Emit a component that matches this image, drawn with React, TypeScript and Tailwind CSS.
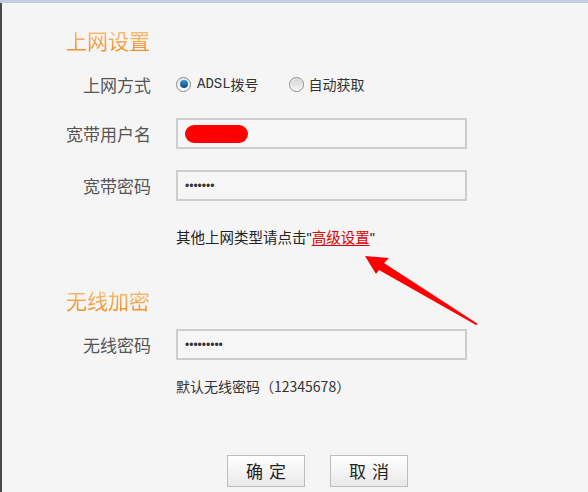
import React from "react";

const cjk = { fontFamily: '"Noto Sans CJK SC", "Liberation Sans", sans-serif' };

function Radio({ checked }: { checked: boolean }) {
  return (
    <span className="flex h-[15px] w-[15px] items-center justify-center rounded-full border border-[#8a8a8a] bg-gradient-to-b from-[#e8e8e8] to-[#ffffff]">
      {checked ? (
        <span className="h-[8px] w-[8px] rounded-full bg-gradient-to-b from-[#3a8fd0] to-[#0b4f8a]" />
      ) : (
        <span className="h-[11px] w-[11px] rounded-full bg-gradient-to-b from-[#d6d6d6] to-[#f4f4f4]" />
      )}
    </span>
  );
}

function Label({ children }: { children: React.ReactNode }) {
  return (
    <div className="w-[149px] shrink-0 text-right text-[17px] leading-none text-[#555555]" style={cjk}>
      {children}
    </div>
  );
}

function Input({ children }: { children?: React.ReactNode }) {
  return (
    <div className="ml-[25px] flex h-[31px] w-[291px] items-center border-2 border-[#cdcdcd] bg-[#f6f6f6] px-[7px]">
      {children}
    </div>
  );
}

function Dots({ n }: { n: number }) {
  return (
    <span
      className="text-[12px] leading-none tracking-[0px] text-[#333]"
      style={{ fontFamily: '"Liberation Sans", sans-serif' }}
    >
      {"•".repeat(n)}
    </span>
  );
}

function Title({ children }: { children: React.ReactNode }) {
  return (
    <div
      className="ml-[64px] h-[24px] w-fit bg-gradient-to-b from-[#fcc27a] to-[#f08c18] bg-clip-text text-[21px] leading-[24px] text-transparent"
      style={cjk}
    >
      {children}
    </div>
  );
}

function Button({ children }: { children: React.ReactNode }) {
  return (
    <div
      className="flex h-[32px] w-[78px] items-center justify-center gap-[6px] border border-[#bdbdbd] bg-gradient-to-b from-[#ffffff] to-[#e9e9e9] text-[17px] text-[#222]"
      style={cjk}
    >
      {children}
    </div>
  );
}

const q = { fontFamily: '"Liberation Sans", sans-serif' };

export default function App() {
  return (
    <div className="relative h-[492px] w-[588px] overflow-hidden border-t-[3px] border-[#c3cddd] bg-[#f5f5f5]">
      <div className="flex h-full flex-col border-l-2 border-[#4a4a4a]">
        <div className="mt-[25px]">
          <Title>上网设置</Title>
        </div>

        <div className="mt-[16px] flex h-[32px] items-center">
          <Label>上网方式</Label>
          <div className="ml-[25px] flex items-center text-[14px] text-[#333]" style={cjk}>
            <Radio checked />
            <span className="ml-[6px]" style={{ fontFamily: '"Liberation Mono", "Noto Sans CJK SC", monospace' }}>
              ADSL
            </span>
            <span>拨号</span>
            <span className="ml-[30px]">
              <Radio checked={false} />
            </span>
            <span className="ml-[5px]">自动获取</span>
          </div>
        </div>

        <div className="mt-[18px] flex items-center">
          <Label>宽带用户名</Label>
          <Input>
            <div className="h-[18px] w-[63px] rounded-[9px] bg-[#ff0000]" />
          </Input>
        </div>

        <div className="mt-[21px] flex items-center">
          <Label>宽带密码</Label>
          <Input>
            <Dots n={7} />
          </Input>
        </div>

        <div className="ml-[174px] mt-[26px] h-[20px] text-[14.5px] leading-[20px] text-[#222]" style={cjk}>
          其他上网类型请点击<span style={q}>"</span>
          <span className="text-[#e00000] underline underline-offset-2">高级设置</span>
          <span style={q}>"</span>
        </div>

        <div className="mt-[41px]">
          <Title>无线加密</Title>
        </div>

        <div className="mt-[17px] flex items-center">
          <Label>无线密码</Label>
          <Input>
            <Dots n={9} />
          </Input>
        </div>

        <div className="ml-[174px] mt-[16px] h-[20px] text-[14px] leading-[20px] text-[#333]" style={cjk}>
          默认无线密码（12345678）
        </div>

        <div className="ml-[225px] mt-[59px] flex gap-[25px]">
          <Button>
            <span>确</span>
            <span>定</span>
          </Button>
          <Button>
            <span>取</span>
            <span>消</span>
          </Button>
        </div>
      </div>

      <svg
        className="absolute left-[355px] top-[242px]"
        width="130"
        height="85"
        viewBox="0 0 130 85"
      >
        <polygon points="10,11 34,13 29,18 123,79 121,80 24,25 21,29" fill="#ff0000" />
      </svg>
    </div>
  );
}
